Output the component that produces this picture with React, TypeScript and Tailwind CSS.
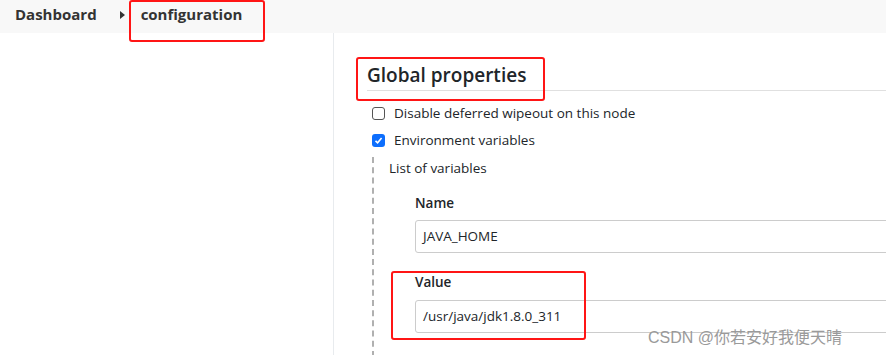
import React from "react";

export default function App() {
  const font = { fontFamily: '"Segoe UI", "Open Sans", "Noto Sans", sans-serif' };
  return (
    <div className="relative w-[886px] h-[355px] overflow-hidden bg-white text-[#333]" style={font}>
      {/* breadcrumb */}
      <div className="h-[33px] bg-[#f8f8f8] flex items-center pl-[15px] pb-[4px]">
        <span className="text-[15px] font-bold text-[#333]">Dashboard</span>
        <svg width="5" height="8" viewBox="0 0 5 8" className="ml-[23px] mr-[16px]">
          <path d="M0 0 L5 4 L0 8 Z" fill="#333" />
        </svg>
        <span className="text-[15px] font-bold text-[#333]">configuration</span>
      </div>
      <div className="flex h-[322px]">
        <div className="w-[334px] border-r border-[#e8ebee] shrink-0" />
        <div className="flex-1 pl-[33px] pt-[29px]">
          <div className="border-b border-[#e0e0e0] pb-[2px] text-[19px] font-semibold text-[#212529] leading-[26px]">
            Global properties
          </div>
          <div className="flex items-center mt-[14px] ml-[5px] h-[16px]">
            <span className="w-[13px] h-[13px] border border-[#555] rounded-[3px] bg-white" />
            <span className="ml-[9px] text-[13.5px] font-medium text-[#212529]">Disable deferred wipeout on this node</span>
          </div>
          <div className="flex items-center mt-[11px] ml-[5px] h-[16px]">
            <span className="w-[13px] h-[13px] rounded-[3px] bg-[#0d6efd] flex items-center justify-center">
              <svg width="9" height="9" viewBox="0 0 9 9">
                <path d="M1.5 4.8 L3.6 6.8 L7.6 2" stroke="white" strokeWidth="1.6" fill="none" />
              </svg>
            </span>
            <span className="ml-[9px] text-[13.5px] font-medium text-[#212529]">Environment variables</span>
          </div>
          <div className="ml-[5px] mt-[9px] border-l-2 border-dashed border-[#b0b0b0] h-[200px] pl-[15px] pt-[1px]">
            <div className="text-[13.5px] font-medium text-[#212529] leading-[20px]">List of variables</div>
            <div className="pl-[26px] pt-[16px]">
              <div className="text-[13.5px] font-semibold text-[#212529] leading-[18px]">Name</div>
              <div className="mt-[8px] h-[33px] border border-[#ccc] rounded-[3px] flex items-center pl-[7px] text-[13.5px] text-[#212529] w-[600px]">
                JAVA_HOME
              </div>
              <div className="mt-[20px] text-[13.5px] font-semibold text-[#212529] leading-[18px]">Value</div>
              <div className="mt-[9px] h-[33px] border border-[#ccc] rounded-[3px] flex items-center pl-[7px] text-[13.5px] text-[#212529] w-[600px]">
                /usr/java/jdk1.8.0_311
              </div>
            </div>
          </div>
        </div>
      </div>
      {/* red annotation boxes */}
      <div className="absolute left-[129px] top-0 w-[136px] h-[42px] border-2 border-[#ff1515] rounded-[3px]" />
      <div className="absolute left-[356px] top-[57px] w-[189px] h-[44px] border-2 border-[#ff1515] rounded-[3px]" />
      <div className="absolute left-[391px] top-[271px] w-[195px] h-[69px] border-2 border-[#ff1515] rounded-[3px]" />
      {/* watermark */}
      <div className="absolute left-[648px] top-[326px] text-[16px] text-[#9a9a9a] whitespace-nowrap" style={{ fontFamily: '"Liberation Sans", "Noto Sans CJK SC", sans-serif' }}>
        CSDN @你若安好我便天晴
      </div>
    </div>
  );
}
